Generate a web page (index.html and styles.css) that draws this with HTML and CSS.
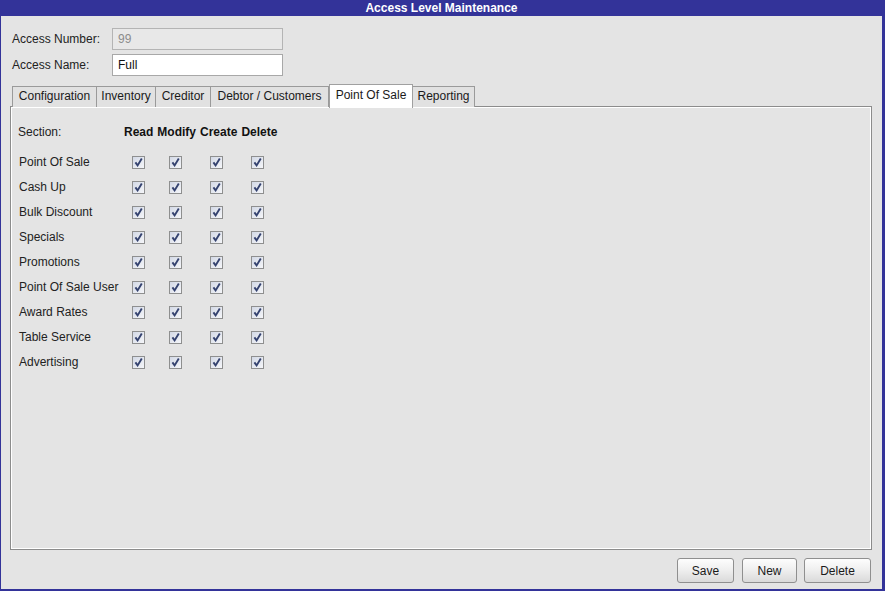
FILE: index.html
```html
<!DOCTYPE html>
<html>
<head>
<meta charset="utf-8">
<link rel="stylesheet" href="styles.css">
</head>
<body>
<div class="window">
  <div class="titlebar">Access Level Maintenance</div>
  <div class="client">
    <div class="fields">
      <div class="field-row">
        <label class="field-label">Access Number:</label>
        <div class="input disabled">99</div>
      </div>
      <div class="field-row">
        <label class="field-label">Access Name:</label>
        <div class="input">Full</div>
      </div>
    </div>
    <div class="tabs">
      <div class="tab tab-config">Configuration</div>
      <div class="tab tab-inv">Inventory</div>
      <div class="tab tab-cred">Creditor</div>
      <div class="tab tab-debt">Debtor / Customers</div>
      <div class="tab tab-pos active">Point Of Sale</div>
      <div class="tab tab-rep">Reporting</div>
    </div>
    <div class="panel">
      <div class="grid head">
        <div class="hdr-label">Section:</div>
        <div class="hdr">Read</div>
        <div class="hdr">Modify</div>
        <div class="hdr">Create</div>
        <div class="hdr">Delete</div>
      </div>
      <div class="grid rows" id="rows"></div>
    </div>
    <div class="buttons">
      <button class="btn btn-save">Save</button>
      <button class="btn btn-new">New</button>
      <button class="btn btn-delete">Delete</button>
    </div>
  </div>
</div>
<script>
var names=["Point Of Sale","Cash Up","Bulk Discount","Specials","Promotions","Point Of Sale User","Award Rates","Table Service","Advertising"];
var box='<span class="cb"><svg width="9" height="9" viewBox="0 0 9 9"><path d="M1.4 4.4 L3.6 7.4 L7.8 0.6" fill="none" stroke="#34426f" stroke-width="1.9"/></svg></span>';
var h="";
names.forEach(function(n){h+='<div class="row-label">'+n+'</div>'+box+box+box+box;});
document.getElementById("rows").innerHTML=h;
</script>
</body>
</html>
```
FILE: styles.css
```css
* { box-sizing: border-box; }
html, body { margin: 0; padding: 0; }
body {
  font-family: "Liberation Sans", Arial, sans-serif;
  font-size: 12px;
  color: #1a1a1a;
  background: #333399;
}
.window {
  width: 885px;
  height: 591px;
  background: #333399;
  display: flex;
  flex-direction: column;
  padding: 0 3px 2px 1px;
}
.titlebar {
  height: 16px;
  line-height: 17px;
  text-align: center;
  color: #fff;
  font-weight: bold;
  font-size: 12px;
}
.client {
  flex: 1;
  background: #e4e4e4;
  display: flex;
  flex-direction: column;
  padding: 12px 10px 0 9px;
}
.fields { display: flex; flex-direction: column; gap: 4px; padding-left: 2px; }
.field-row { display: flex; align-items: center; height: 22px; }
.field-label { width: 100px; color: #222; }
.input {
  width: 171px;
  height: 22px;
  border: 1px solid #a8a8a8;
  background: #fff;
  padding: 0 0 0 5px;
  line-height: 20px;
  color: #111;
}
.input.disabled { background: #e8e8e8; color: #8c8c8c; border-color: #b4b4b4; }
.tabs {
  display: flex;
  align-items: flex-end;
  margin-top: 7px;
  padding-left: 2px;
  height: 23px;
  position: relative;
  z-index: 1;
}
.tab {
  height: 21px;
  line-height: 19px;
  padding: 0;
  text-align: center;
  border: 1px solid #9a9a9a;
  border-bottom: none;
  background: #e1e1e1;
  color: #1a1a1a;
  margin-bottom: -1px;
  white-space: nowrap;
}
.tab + .tab { border-left: none; }
.tab.active {
  height: 24px;
  line-height: 20px;
  border-left: 1px solid #a0a0a0;
  border-color: #a0a0a0;
  margin-bottom: -2px;
  background: #fff;
}
.tab-config { width: 85px; }
.tab-inv { width: 59px; }
.tab-cred { width: 55px; }
.tab-debt { width: 118px; }
.tab-pos { width: 84px; }
.tab-rep { width: 62px; }
.panel {
  height: 444px;
  border: 1px solid #8c8c8c;
  box-shadow: inset 1px 1px 0 #fff, inset -1px -1px 0 #fff;
  padding: 17px 0 0 7px;
}
.grid { display: grid; justify-content: start; }
.head {
  grid-template-columns: 102px auto auto auto auto;
  column-gap: 4px;
}
.hdr-label { height: 16px; line-height: 16px; color: #222; }
.hdr { font-weight: bold; line-height: 16px; color: #111; white-space: nowrap; }
.rows {
  margin-top: 16px;
  grid-template-columns: 106px 28px 46px 36px 46px;
  row-gap: 12px;
  grid-auto-rows: 13px;
  align-items: center;
}
.row-label { padding-left: 1px; line-height: 13px; white-space: nowrap; color: #222; }
.cb {
  justify-self: center;
  width: 13px;
  height: 13px;
  border: 1px solid #8e8f8f;
  background: linear-gradient(135deg, #d3d9e6, #f5f6f9);
  display: flex;
  align-items: center;
  justify-content: center;
}
.buttons {
  display: flex;
  justify-content: flex-end;
  gap: 7px;
  margin-top: 8px;
  padding-right: 1px;
}
.btn {
  font-family: "Liberation Sans", Arial, sans-serif;
  font-size: 12px;
  color: #1a1a1a;
  height: 25px;
  border: 1px solid #8f8f8f;
  border-radius: 3px;
  background: linear-gradient(#fdfdfd, #eeeeee 50%, #dadada);
  padding: 0;
}
.btn-save { width: 57px; margin-right: 1px; }
.btn-new { width: 55px; }
.btn-delete { width: 67px; }
```
